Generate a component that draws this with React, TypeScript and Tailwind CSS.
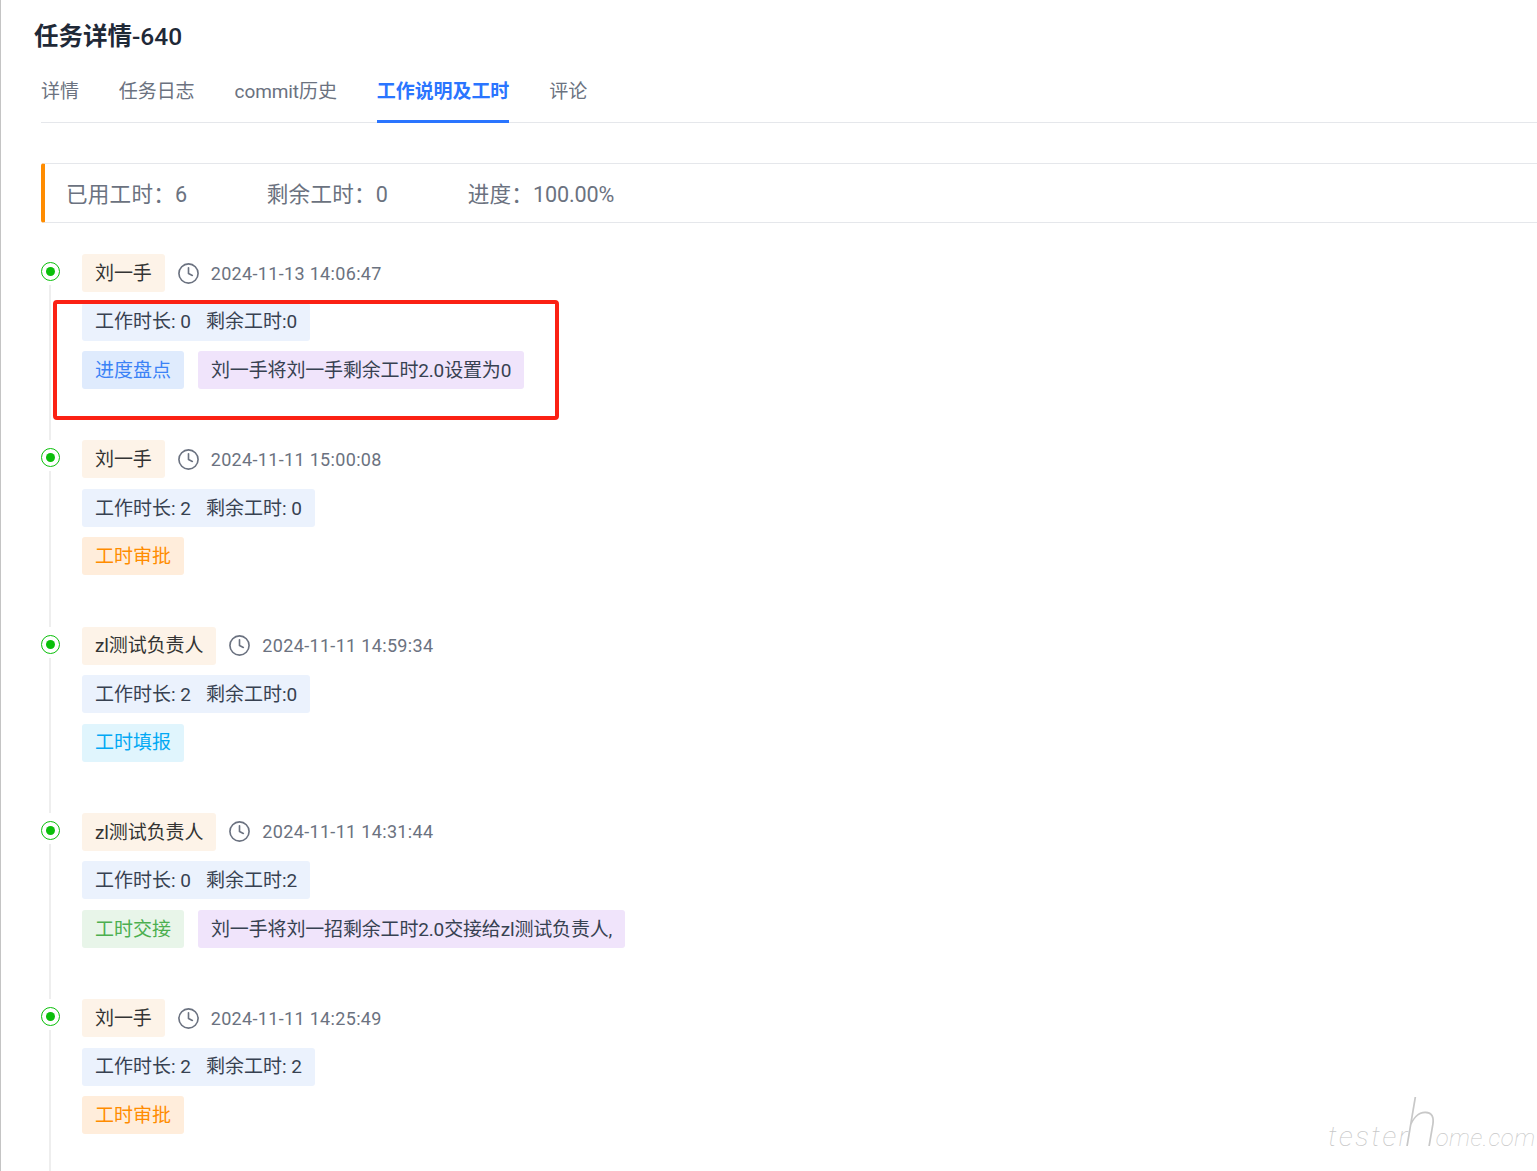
import { Clock } from 'lucide-react';

const FONT = 'font-["Roboto","Noto_Sans_CJK_SC",sans-serif]';

const TABS = ['详情', '任务日志', 'commit历史', '工作说明及工时', '评论'];

const TAG_COLORS: Record<string, string> = {
  盘点: 'bg-[#dfebfd] text-[#3b82f6]',
  审批: 'bg-[#ffeddb] text-[#ff8c00]',
  填报: 'bg-[#e0f5fd] text-[#03a9f4]',
  交接: 'bg-[#e8f5e9] text-[#4caf50]',
};

const LOGS = [
  { user: '刘一手', time: '2024-11-13 14:06:47', work: '工作时长: 0', left: '剩余工时:0', tag: '进度盘点', kind: '盘点', note: '刘一手将刘一手剩余工时2.0设置为0' },
  { user: '刘一手', time: '2024-11-11 15:00:08', work: '工作时长: 2', left: '剩余工时: 0', tag: '工时审批', kind: '审批' },
  { user: 'zl测试负责人', time: '2024-11-11 14:59:34', work: '工作时长: 2', left: '剩余工时:0', tag: '工时填报', kind: '填报' },
  { user: 'zl测试负责人', time: '2024-11-11 14:31:44', work: '工作时长: 0', left: '剩余工时:2', tag: '工时交接', kind: '交接', note: '刘一手将刘一招剩余工时2.0交接给zl测试负责人,' },
  { user: '刘一手', time: '2024-11-11 14:25:49', work: '工作时长: 2', left: '剩余工时: 2', tag: '工时审批', kind: '审批' },
];

function Tag({ className, children }: { className: string; children: React.ReactNode }) {
  return <span className={`flex h-[38px] items-center rounded-[3px] px-[13px] pt-[2px] text-[19px] whitespace-nowrap ${className}`}>{children}</span>;
}

export default function App() {
  return (
    <div className={`relative h-[1171px] overflow-hidden border-l border-[#c4c4c4] bg-white ${FONT}`}>
      <div className="pl-[40px]">
        <h1 className="-ml-[7px] pt-[20px] text-[24.5px] leading-[34px] font-bold text-[#1f2937]">
          任务详情<span className="font-medium">-640</span>
        </h1>

        <div className="mt-[16px] flex h-[53px] gap-[40px] border-b border-[#e5e7eb] tracking-[-0.08px]">
          {TABS.map((tab) => (
            <div key={tab} className={tab === '工作说明及工时' ? 'h-[53px] border-b-[3px] border-[#2a75ff] text-[19px] leading-[44px] font-bold text-[#2a75ff]' : 'text-[19px] leading-[44px] text-[#6b7280]'}>
              {tab}
            </div>
          ))}
        </div>

        <div className="mt-[40px] flex h-[60px] items-center gap-[79.5px] rounded-l-[3px] border-y border-[#e5e7eb] border-l-4 border-l-[#ff8c00] pl-[21px] pt-[4px] text-[21.6px] tracking-[0.2px] text-[#6b7280]">
          <span>已用工时：6</span>
          <span>剩余工时：0</span>
          <span>进度：<span className="tracking-[-0.15px]">100.00%</span></span>
        </div>

        <div className="mt-[31px]">
          {LOGS.map((log) => (
            <div key={log.time} className="flex">
              <div className="flex w-[41px] shrink-0 flex-col pt-[8px]">
                <span className="flex h-[19px] w-[19px] items-center justify-center rounded-full border-[1.5px] border-[#0abf0a]">
                  <span className="h-[9px] w-[9px] rounded-full bg-[#0abf0a]" />
                </span>
                <span className="ml-[8px] mt-[4px] w-[2px] flex-1 bg-[#eeeeee]" />
              </div>
              <div className="flex flex-col gap-[10.5px] pb-[51.25px]">
                <div className="flex items-center">
                  <Tag className="bg-[#fdf3e8] tracking-[-0.1px] text-[#333333]">{log.user}</Tag>
                  <Clock className="ml-[12px] h-[23px] w-[23px] text-[#6b7280]" strokeWidth={1.7} />
                  <span className="ml-[11px] text-[18px] tracking-[0.33px] text-[#6b7280]">{log.time}</span>
                </div>
                <div className="flex">
                  <Tag className="gap-[15px] bg-[#ebf2fd] text-[#374151]">
                    <span>{log.work}</span>
                    <span>{log.left}</span>
                  </Tag>
                </div>
                <div className="flex gap-[14px]">
                  <Tag className={TAG_COLORS[log.kind]}>{log.tag}</Tag>
                  {log.note && <Tag className="bg-[#f0e4fb] tracking-[-0.16px] text-[#374151]">{log.note}</Tag>}
                </div>
              </div>
            </div>
          ))}
        </div>
      </div>

      {/* red annotation drawn over the first log */}
      <div className="absolute top-[300px] left-[52px] h-[120px] w-[506px] rounded-[4px] border-[4px] border-[#fb2114]" />

      {/* watermark */}
      <div className="absolute top-[1090px] left-[1327px] flex items-baseline text-[28px] font-thin tracking-[2.5px] whitespace-nowrap text-[#c8c8c8] italic">
        <span>tester</span>
        <span className="-ml-[6px] text-[64px] leading-[70px]">h</span>
        <span className="-ml-[5px] text-[24px] tracking-[0.6px]">ome.com</span>
      </div>
    </div>
  );
}
